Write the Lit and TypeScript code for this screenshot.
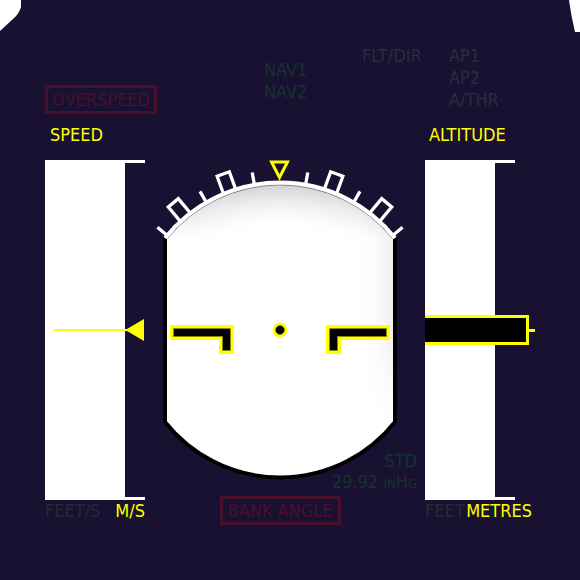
import { LitElement, html, css, svg } from "lit";
import { customElement } from "lit/decorators.js";

const MINOR_TICKS = [-50, -30, -10, 10, 30, 50];
const MAJOR_TICKS = [-40, -20, 20, 40];

@customElement("bank-dial")
class BankDial extends LitElement {
  static styles = css`
    :host { display: block; }
    svg { display: block; width: 100%; overflow: visible; }
    .scale { fill: none; stroke: #fff; stroke-width: 3.3; }
    .side { fill: none; stroke: #000; stroke-width: 4; }
    .arc { fill: none; stroke: #fff; stroke-width: 4; }
    .rim { fill: none; stroke: #85858c; stroke-width: 1; }
    .index { fill: none; stroke: #ff0; stroke-width: 3; }
    .wing { fill: #000; stroke: #ff0; stroke-width: 4; }
    .edge { fill: #000; stroke: #8a8a00; stroke-width: 1; }
  `;

  render() {
    const face = "M165 238A147 147 0 0 1 395 238V422A147 147 0 0 1 165 422Z";
    return html`
      <svg viewBox="155 160 250 340" role="img" aria-label="Attitude indicator">
        <defs>
          <radialGradient id="top" gradientUnits="userSpaceOnUse" cx="280" cy="330" r="146">
            <stop offset="0.72" stop-color="#d0d0d5" stop-opacity="0" />
            <stop offset="1" stop-color="#d0d0d5" />
          </radialGradient>
          <linearGradient id="fade" gradientUnits="userSpaceOnUse" x1="0" y1="184" x2="0" y2="240">
            <stop offset="0" stop-color="#fff" />
            <stop offset="1" stop-color="#000" />
          </linearGradient>
          <linearGradient id="right" gradientUnits="userSpaceOnUse" x1="360" y1="0" x2="395" y2="0">
            <stop offset="0" stop-color="#eee" stop-opacity="0" />
            <stop offset="0.5" stop-color="#eee" stop-opacity="0.25" />
            <stop offset="1" stop-color="#eee" />
          </linearGradient>
          <linearGradient id="rightFade" gradientUnits="userSpaceOnUse" x1="0" y1="190" x2="0" y2="420">
            <stop offset="0" stop-color="#fff" />
            <stop offset="0.6" stop-color="#fff" />
            <stop offset="1" stop-color="#000" />
          </linearGradient>
          <mask id="topMask"><rect x="155" y="160" width="250" height="340" fill="url(#fade)" /></mask>
          <mask id="rightMask"><rect x="155" y="160" width="250" height="340" fill="url(#rightFade)" /></mask>
        </defs>
        <path d=${face} fill="#fff" />
        <path d=${face} fill="url(#right)" mask="url(#rightMask)" />
        <path d=${face} fill="url(#top)" mask="url(#topMask)" />
        <path class="side" d="M165 237V422A147 147 0 0 0 395 422V237" />
        <path class="rim" d="M167.500 238.500A145 145 0 0 1 392.500 238.500" />
        <path class="arc" d="M165 238A147 147 0 0 1 395 238" />
        <g class="scale">
          ${MINOR_TICKS.map((a) => svg`<path d="M280 184V170" transform="rotate(${a} 280 330)" />`)}
          ${MAJOR_TICKS.map((a) => svg`<path d="M273.500 184V164H286.500V184" transform="rotate(${a} 280 330)" />`)}
        </g>
        <path class="index" d="M271.500 162H287.500L279.500 177.500Z" />
        <path class="wing" d="M172 327H232V352H221V338H172Z" />
        <path class="edge" d="M173.500 328.500H230.500V350.500H222.500V336.500H173.500Z" />
        <path class="wing" d="M388 327H328V352H339V338H388Z" />
        <path class="edge" d="M386.500 328.500H329.500V350.500H337.500V336.500H386.500Z" />
        <circle cx="280" cy="330" r="7.500" fill="#ff0" />
        <circle class="edge" cx="280" cy="330" r="4.500" />
      </svg>
    `;
  }
}

@customElement("app-root")
class AppRoot extends LitElement {
  static styles = css`
    :host {
      display: block;
      position: relative;
      box-sizing: border-box;
      min-height: 100vh;
      padding: 45px 45px 0;
      overflow: hidden;
      background: #181131;
      color: #ff0;
      font: 18px/22px "DejaVu Sans Condensed", "DejaVu Sans", sans-serif;
      white-space: nowrap;
    }
    .corner { position: absolute; top: 0; fill: #fff; }
    .corner.left { left: 0; }
    .corner.right { right: 0; }
    header {
      display: grid;
      grid-template-columns: 219fr 98fr 87fr 86fr;
      align-items: start;
      min-height: 79px;
    }
    .dim { color: #2f2942; }
    .off { color: #2b2833; }
    .green { color: #16322f; }
    .nav { padding-top: 14px; }
    .warning {
      box-sizing: border-box;
      border: 3px solid #48102b;
      color: #48102b;
      text-align: center;
      line-height: 23px;
      height: 29px;
    }
    .overspeed { width: 112px; margin-top: 40px; }
    .bank { width: 121px; }
    .columns {
      display: grid;
      grid-template-columns: 100px 1fr 110px;
    }
    .title { padding: 0 0 14px 5px; }
    .title.alt { padding-left: 4px; }
    .tape {
      display: flex;
      align-items: center;
      position: relative;
      min-height: 340px;
      background:
        linear-gradient(#fff, #fff) top left / 100% 3px no-repeat,
        linear-gradient(#fff, #fff) bottom left / 100% 3px no-repeat,
        linear-gradient(#fff, #fff) left / 80px 100% no-repeat;
    }
    .tape.alt {
      margin-right: 20px;
      background-size: 100% 3px, 100% 3px, 70px 100%;
    }
    .needle { margin-left: 9px; }
    .readout {
      box-sizing: border-box;
      flex: none;
      width: 104px;
      height: 30px;
      border: 3px solid #ff0;
      border-left: 0;
      background: #000;
    }
    .lead { flex: none; width: 6px; height: 3px; background: #ff0; }
    .stage { position: relative; padding: 0 20px 0 10px; }
    .baro {
      position: absolute;
      right: 8px;
      bottom: 8px;
      text-align: right;
      line-height: 21px;
    }
    .unit { font-variant: small-caps; }
    .units { display: flex; justify-content: space-between; }
    .units.alt { padding-right: 3px; }
    .alert { display: flex; justify-content: center; padding-right: 10px; margin-top: -4px; }
  `;

  render() {
    return html`
      <svg class="corner left" width="21" height="32" aria-hidden="true">
        <path d="M0 0H21V7Q19 14 13 19L0 31Z" />
      </svg>
      <svg class="corner right" width="11" height="32" aria-hidden="true">
        <path d="M0 0H11V32H6Q2 16 0 0Z" />
      </svg>
      <header>
        <div class="warning overspeed">OVERSPEED</div>
        <div class="nav green">NAV1<br />NAV2</div>
        <div class="dim">FLT/DIR</div>
        <div class="dim">AP1<br />AP2<br />A/THR</div>
      </header>
      <main class="columns">
        <div class="title">SPEED</div>
        <div></div>
        <div class="title alt">ALTITUDE</div>

        <div class="tape">
          <svg class="needle" width="90" height="22" aria-hidden="true">
            <path fill="#ff0" d="M0 10H73L90 0V22L73 12H0Z" />
          </svg>
        </div>
        <div class="stage">
          <bank-dial></bank-dial>
          <div class="baro green">STD<br />29.92 <span class="unit">inHg</span></div>
        </div>
        <div class="tape alt">
          <div class="readout"></div>
          <div class="lead"></div>
        </div>

        <div class="units"><span class="off">FEET/S</span><span>M/S</span></div>
        <div class="alert"><div class="warning bank">BANK ANGLE</div></div>
        <div class="units alt"><span class="off">FEET</span><span>METRES</span></div>
      </main>
    `;
  }
}
